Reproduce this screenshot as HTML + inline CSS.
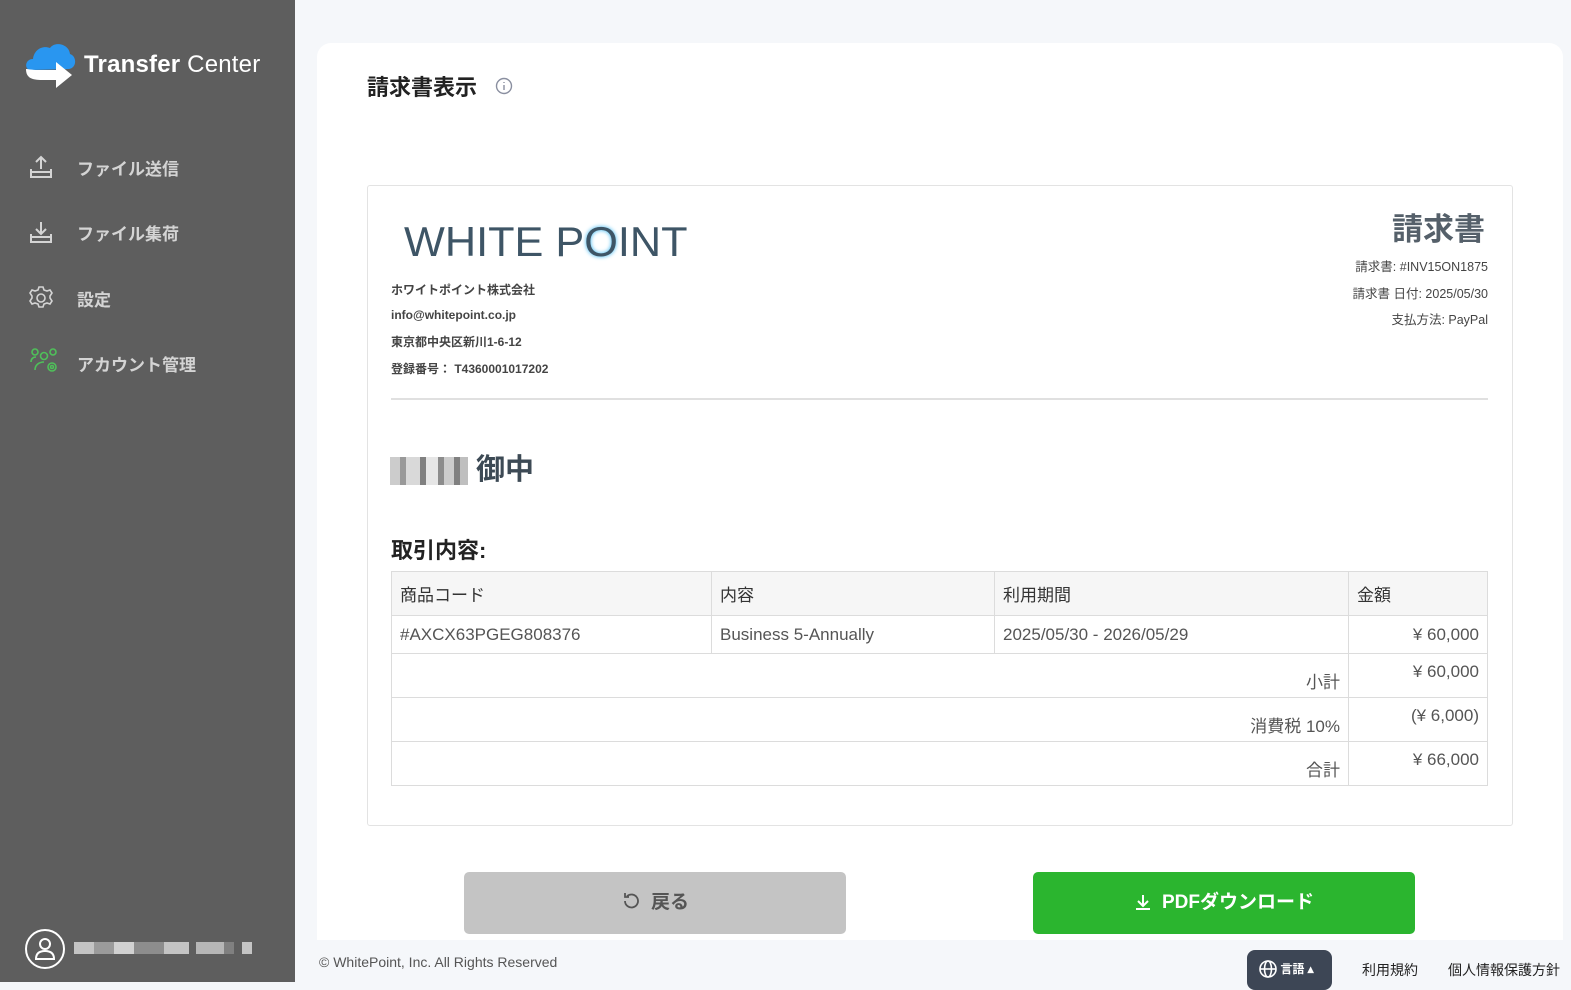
<!DOCTYPE html>
<html><head><meta charset="utf-8"><style>
*{box-sizing:border-box;margin:0;padding:0}
body{width:1571px;height:982px;overflow:hidden;background:#f5f7fa;font-family:"Liberation Sans","Noto Sans CJK JP",sans-serif;position:relative;color:#333}
.side{position:absolute;left:0;top:0;width:295px;height:982px;background:#5e5e5e}
.logo{position:absolute;left:84px;top:51px;color:#fff;font-size:24px;letter-spacing:.2px}
.nav{position:absolute;left:77px;font-size:17px;font-weight:bold;color:#d4d4d4}
.ico{position:absolute;left:28px}
.card{position:absolute;left:317px;top:43px;width:1246px;height:897px;background:#fff;border-radius:14px 14px 0 0}
.ab{position:absolute}
.inv{position:absolute;left:367px;top:185px;width:1146px;height:641px;border:1px solid #e3e3e3;border-radius:3px}
.s{font-size:12px;font-weight:bold;color:#444}
table{position:absolute;left:391px;top:571px;width:1097px;border-collapse:collapse;font-size:17px;color:#555}
td{border:1px solid #dcdcdc;padding:0 8px}
.h td{background:#f6f6f6;color:#333;height:44px}
.r td{height:38px}
.t td{height:44px}
.rt{text-align:right}
.mos{display:inline-block;width:78px;height:28px;background:linear-gradient(90deg,#bbb 0 10px,#777 10px 16px,#ccc 16px 30px,#555 30px 36px,#ddd 36px 48px,#666 48px 54px,#bbb 54px 64px,#555 64px 70px,#aaa 70px);opacity:.75;vertical-align:middle}
</style></head><body>
<div class="side">
<svg class="ab" style="left:24px;top:42px" width="54" height="48" viewBox="0 0 54 48"><path d="M6 28 C0 27 1 17 9 17 C10 8 18 3 26 6 C31 -1 45 2 46 12 C53 14 53 26 45 27 Z" fill="#2996f0"/><path d="M2 27 C2 36 8 38 18 38 L32 38 L32 46 L48 33 L32 20 L32 28 L14 28 C8 28 4 27 2 27Z" fill="#fff"/></svg>
<div class="logo"><span style="font-weight:bold">Transfer</span> Center</div>
<svg class="ico" style="top:154px" width="26" height="26" viewBox="0 0 26 26" fill="none" stroke="#d4d4d4" stroke-width="2"><path d="M13 3v12M8 8l5-5 5 5M3 15v8h20v-8"/><path d="M3 18h20"/></svg>
<div class="nav" style="top:155px">ファイル送信</div>
<svg class="ico" style="top:219px" width="26" height="26" viewBox="0 0 26 26" fill="none" stroke="#d4d4d4" stroke-width="2"><path d="M13 3v12M8 10l5 5 5-5M3 15v8h20v-8"/><path d="M3 18h20"/></svg>
<div class="nav" style="top:220px">ファイル集荷</div>
<svg class="ico" style="top:285px" width="26" height="26" viewBox="0 0 26 26" fill="none" stroke="#d4d4d4" stroke-width="1.6"><circle cx="13" cy="13" r="4"/><path d="M11 2h4l1 3 3 1 3-1 2 3-2 3v2l2 3-2 3-3-1-3 1-1 3h-4l-1-3-3-1-3 1-2-3 2-3v-2l-2-3 2-3 3 1 3-1z"/></svg>
<div class="nav" style="top:286px">設定</div>
<svg class="ico" style="top:348px;left:30px" width="30" height="26" viewBox="0 0 30 26" fill="none" stroke="#4fc05a" stroke-width="1.6"><circle cx="5" cy="4" r="3"/><circle cx="14" cy="8" r="3.5"/><circle cx="23" cy="4" r="3"/><path d="M1 14c0-3 2-5 5-5M5 22c0-5 4-8 9-8"/><circle cx="22" cy="19" r="4"/><circle cx="22" cy="19" r="1.5"/></svg>
<div class="nav" style="top:351px">アカウント管理</div>
<svg class="ab" style="left:24px;top:928px" width="42" height="42" viewBox="0 0 42 42" fill="none" stroke="#fff" stroke-width="2"><circle cx="21" cy="21" r="19"/><circle cx="21" cy="16" r="5"/><path d="M12 31c0-6 4-8 9-8s9 2 9 8z"/></svg>
<div class="ab" style="left:74px;top:942px;width:178px;height:12px;background:linear-gradient(90deg,#ddd 0 20px,#aaa 20px 40px,#eee 40px 60px,#999 60px 90px,#ddd 90px 115px,#5e5e5e 115px 122px,#ccc 122px 150px,#888 150px 160px,#5e5e5e 160px 168px,#ddd 168px);opacity:.8"></div>
</div>
<div class="card"></div>
<div class="ab" style="left:367px;top:70px;font-size:22px;font-weight:bold;color:#222">請求書表示</div>
<svg class="ab" style="left:495px;top:77px" width="18" height="18" viewBox="0 0 18 18" fill="none" stroke="#8a8fa0" stroke-width="1.4"><circle cx="9" cy="9" r="7.5"/><path d="M9 8v5M9 5v1"/></svg>
<div class="inv"></div>
<div class="ab" style="left:404px;top:217px;font-size:42px;color:#3e5566;letter-spacing:0;line-height:50px;transform:scaleX(1.03);transform-origin:left">WHITE P<span style="text-shadow:0 0 4px #2ab0f0">O</span>INT</div>
<div class="ab s" style="left:391px;top:281px">ホワイトポイント株式会社</div>
<div class="ab s" style="left:391px;top:308px">info@whitepoint.co.jp</div>
<div class="ab s" style="left:391px;top:333px">東京都中央区新川1-6-12</div>
<div class="ab s" style="left:391px;top:360px">登録番号： T4360001017202</div>
<div class="ab" style="left:1392px;top:204px;font-size:31px;font-weight:bold;color:#55606a">請求書</div>
<div class="ab" style="right:83px;top:254px;font-size:12.5px;color:#444;text-align:right;line-height:26.5px">請求書: #INV15ON1875<br>請求書 日付: 2025/05/30<br>支払方法: PayPal</div>
<div class="ab" style="left:391px;top:398px;width:1097px;height:2px;background:#e0e0e0"></div>
<div class="ab" style="left:390px;top:446px;font-size:29px;font-weight:bold;color:#3d4a55"><span class="mos"></span> 御中</div>
<div class="ab" style="left:391px;top:533px;font-size:22px;font-weight:bold;color:#222">取引内容:</div>
<table>
<tr class="h"><td style="width:320px">商品コード</td><td style="width:283px">内容</td><td style="width:354px">利用期間</td><td>金額</td></tr>
<tr class="r"><td>#AXCX63PGEG808376</td><td>Business 5-Annually</td><td>2025/05/30 - 2026/05/29</td><td class="rt">¥ 60,000</td></tr>
<tr class="t"><td colspan="3" class="rt" style="padding-top:10px">小計</td><td class="rt" style="vertical-align:top;padding-top:8px">¥ 60,000</td></tr>
<tr class="t"><td colspan="3" class="rt" style="padding-top:10px">消費税 10%</td><td class="rt" style="vertical-align:top;padding-top:8px">(¥ 6,000)</td></tr>
<tr class="t"><td colspan="3" class="rt" style="padding-top:10px">合計</td><td class="rt" style="vertical-align:top;padding-top:8px">¥ 66,000</td></tr>
</table>
<div class="ab" style="left:464px;top:872px;width:382px;height:62px;background:#c4c4c4;border-radius:5px;color:#555;font-size:19px;font-weight:bold;text-align:center;line-height:62px"><svg style="vertical-align:-3px;margin-right:10px" width="20" height="20" viewBox="0 0 20 20" fill="none" stroke="#555" stroke-width="1.8"><path d="M4 10a6.5 6.5 0 1 0 2-4.7"/><path d="M4 2v4h4"/></svg>戻る</div>
<div class="ab" style="left:1033px;top:872px;width:382px;height:62px;background:#2bb52f;border-radius:5px;color:#fff;font-size:19px;font-weight:bold;text-align:center;line-height:62px"><svg style="vertical-align:-3px;margin-right:10px" width="18" height="18" viewBox="0 0 18 18" fill="none" stroke="#fff" stroke-width="2"><path d="M9 2v10M4 8l5 5 5-5M2 16h14"/></svg>PDFダウンロード</div>
<div class="ab" style="left:319px;top:954px;font-size:14px;color:#555">© WhitePoint, Inc. All Rights Reserved</div>
<div class="ab" style="left:1247px;top:950px;width:85px;height:40px;background:#3d4655;border-radius:8px;color:#fff;font-size:12px;font-weight:bold;padding:10px 0 0 12px">
<svg style="vertical-align:-5px" width="18" height="18" viewBox="0 0 18 18" fill="none" stroke="#fff" stroke-width="1.6"><circle cx="9" cy="9" r="8"/><ellipse cx="9" cy="9" rx="3.5" ry="8"/><path d="M1 9h16"/></svg> 言語 ▴</div>
<div class="ab" style="left:1362px;top:960px;font-size:14px;color:#222">利用規約</div>
<div class="ab" style="left:1448px;top:960px;font-size:14px;color:#222">個人情報保護方針</div>
</body></html>
